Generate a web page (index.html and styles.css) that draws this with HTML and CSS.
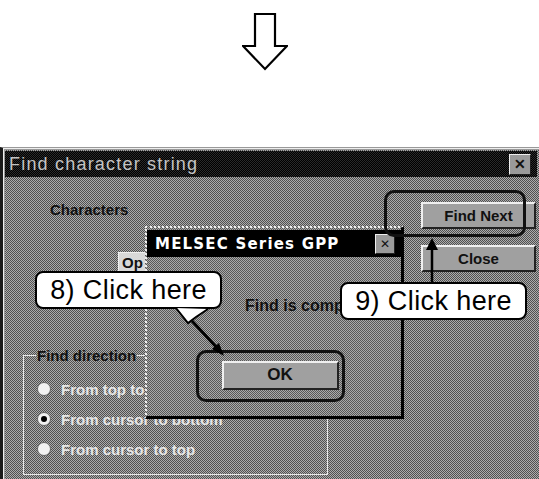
FILE: index.html
```html
<!DOCTYPE html>
<html lang="en">
<head>
    <meta charset="UTF-8">
    <title>Find character string</title>
    <link rel="stylesheet" href="styles.css">
</head>
<body>
    <div class="arrow-row">
        <svg class="down-arrow" width="46" height="58" viewBox="0 0 46 58">
            <path d="M13 1 H33 V33 H45 L23 56 L1 33 H13 Z" fill="#fff" stroke="#000" stroke-width="2.2" stroke-linejoin="miter"/>
        </svg>
    </div>

    <div class="window">
        <div class="titlebar">
            <span class="title">Find character string</span>
            <span class="close-box">&#x2715;</span>
        </div>

        <div class="win-body">
            <div class="left-col">
                <div class="label">Characters</div>
                <div class="field">Op</div>
                <fieldset class="group">
                    <legend>Find direction</legend>
                    <div class="radio-row"><span class="radio"></span>From top to bottom</div>
                    <div class="radio-row"><span class="radio checked"></span>From cursor to bottom</div>
                    <div class="radio-row"><span class="radio"></span>From cursor to top</div>
                </fieldset>
            </div>
            <div class="right-col">
                <div class="btn">Find Next</div>
                <div class="btn">Close</div>
            </div>
        </div>

        <!-- message box on top of the find window -->
        <div class="msgbox">
            <div class="msg-title">
                <span>MELSEC Series GPP</span>
                <span class="close-box small">&#x2715;</span>
            </div>
            <div class="msg-body">
                <div class="msg-text">Find is completed.</div>
                <div class="btn ok">OK</div>
            </div>
        </div>

        <div class="ring ring-find"></div>
        <div class="ring ring-ok"></div>

        <div class="callout callout-8">8) Click here</div>
        <svg class="pointer pointer-8" width="70" height="60" viewBox="0 0 70 60">
            <path d="M4 1 L16 16 L24 10 L36 2" fill="#fff" stroke="#000" stroke-width="2"/>
            <line x1="20" y1="14" x2="48" y2="44" stroke="#000" stroke-width="3"/>
            <path d="M52 49 L40 42 L47 36 Z" fill="#000"/>
        </svg>

        <div class="callout callout-9">9) Click here</div>
        <svg class="pointer pointer-9" width="20" height="46" viewBox="0 0 20 46">
            <line x1="10" y1="10" x2="10" y2="46" stroke="#000" stroke-width="2.5"/>
            <path d="M10 0 L16 12 L4 12 Z" fill="#000"/>
        </svg>
    </div>
</body>
</html>
```

FILE: styles.css
```css
html, body {
    margin: 0;
    padding: 0;
    background: #fff;
    width: 539px;
    height: 479px;
    overflow: hidden;
    font-family: "Liberation Sans", Arial, sans-serif;
}

.arrow-row {
    height: 147px;
    display: flex;
    align-items: flex-start;
    padding-left: 242px;
    box-sizing: border-box;
    padding-top: 13px;
}

.window {
    position: relative;
    height: 332px;
    border-left: 3px solid #1a1a1a;
    border-top: 1px solid #999;
    box-shadow: inset 1px 1px 0 #eee, inset 2px 2px 0 #999;
    background: repeating-conic-gradient(#505050 0 25%, #acacac 0 50%) 0 0 / 2px 2px;
    box-sizing: border-box;
    overflow: hidden;
}

.titlebar {
    margin: 3px 2px 0 2px;
    height: 26px;
    background: repeating-conic-gradient(#000 0 25%, #2a2a2a 0 50%) 0 0 / 2px 2px;
    display: flex;
    align-items: center;
    justify-content: space-between;
    padding: 0 6px 0 4px;
}

.title {
    color: #c4c4c4;
    font-size: 18px;
    letter-spacing: 1.2px;
}

.close-box {
    width: 20px;
    height: 19px;
    background: #9a9a9a;
    border: 1px solid #eee;
    border-right-color: #222;
    border-bottom-color: #222;
    color: #111;
    font-size: 14px;
    font-weight: bold;
    line-height: 19px;
    text-align: center;
}

.win-body {
    display: grid;
    grid-template-columns: 1fr 118px;
    padding-top: 24px;
}

.left-col {
    display: flex;
    flex-direction: column;
    align-items: flex-start;
}

.label {
    margin-left: 47px;
    font-size: 15px;
    font-weight: bold;
    color: #111;
    line-height: 18px;
}

.field {
    margin: 33px 0 0 115px;
    width: 220px;
    height: 20px;
    background: #d8d8d8;
    border: 1px solid #222;
    border-top-color: #f0f0f0;
    border-left-color: #f0f0f0;
    font-size: 15px;
    font-weight: bold;
    line-height: 20px;
    padding-left: 3px;
    color: #111;
}

.group {
    margin: 73px 0 0 20px;
    width: 305px;
    height: 128px;
    box-sizing: border-box;
    border: 1px solid #e8e8e8;
    padding: 10px 0 0 13px;
}

.group legend {
    font-size: 15px;
    font-weight: bold;
    color: #111;
    padding: 0 1px;
    margin-left: -1px;
}

.radio-row {
    display: flex;
    align-items: center;
    gap: 10px;
    height: 30px;
    font-size: 15px;
    font-weight: bold;
    color: #e6e6e6;
}

.radio {
    width: 14px;
    height: 14px;
    border-radius: 50%;
    background: #f2f2f2;
    border: 1px solid #666;
    box-sizing: border-box;
    position: relative;
}

.radio.checked::after {
    content: "";
    position: absolute;
    left: 3px;
    top: 3px;
    width: 6px;
    height: 6px;
    border-radius: 50%;
    background: #000;
}

.right-col {
    display: flex;
    flex-direction: column;
    gap: 16px;
    padding-top: 1px;
}

.btn {
    width: 115px;
    height: 27px;
    box-sizing: border-box;
    background: #a0a0a0;
    border: 2px solid #f0f0f0;
    border-right-color: #222;
    border-bottom-color: #222;
    font-size: 15px;
    font-weight: bold;
    line-height: 23px;
    text-align: center;
    color: #111;
}

.msgbox {
    position: absolute;
    left: 142px;
    top: 78px;
    width: 259px;
    height: 193px;
    box-sizing: border-box;
    border-left: 2px dotted #eee;
    border-top: 2px dotted #eee;
    border-right: 3px solid #000;
    border-bottom: 3px solid #000;
    background: repeating-conic-gradient(#585858 0 25%, #aaaaaa 0 50%) 0 0 / 2px 2px;
    display: flex;
    flex-direction: column;
}

.msg-title {
    margin-top: 2px;
    height: 27px;
    background: #000;
    color: #fff;
    display: flex;
    align-items: center;
    justify-content: space-between;
    padding: 0 6px 0 8px;
    font-family: "DejaVu Sans", sans-serif;
    font-weight: bold;
    font-size: 15px;
    letter-spacing: 1.2px;
}

.close-box.small {
    width: 18px;
    height: 18px;
    line-height: 18px;
    font-size: 12px;
    letter-spacing: 0;
}

.msg-body {
    display: flex;
    flex-direction: column;
    align-items: center;
}

.msg-text {
    align-self: flex-start;
    margin: 40px 0 0 98px;
    font-size: 16px;
    font-weight: bold;
    color: #111;
    white-space: nowrap;
}

.btn.ok {
    margin: 46px 0 0 12px;
    width: 117px;
    height: 29px;
    font-size: 17px;
}

.ring {
    position: absolute;
    border: 3px solid #111;
    border-radius: 10px;
}

.ring-find {
    left: 381px;
    top: 42px;
    width: 136px;
    height: 41px;
}

.ring-ok {
    left: 193px;
    top: 202px;
    width: 143px;
    height: 46px;
}

.callout {
    position: absolute;
    background: #fff;
    border: 2px solid #000;
    border-radius: 8px;
    box-sizing: border-box;
    height: 38px;
    width: 187px;
    font-size: 27px;
    line-height: 34px;
    letter-spacing: 0.4px;
    text-align: center;
    color: #000;
}

.callout-8 {
    left: 32px;
    top: 123px;
}

.callout-9 {
    left: 337px;
    top: 134px;
}

.pointer {
    position: absolute;
}

.pointer-8 {
    left: 169px;
    top: 159px;
}

.pointer-9 {
    left: 419px;
    top: 90px;
}
```
